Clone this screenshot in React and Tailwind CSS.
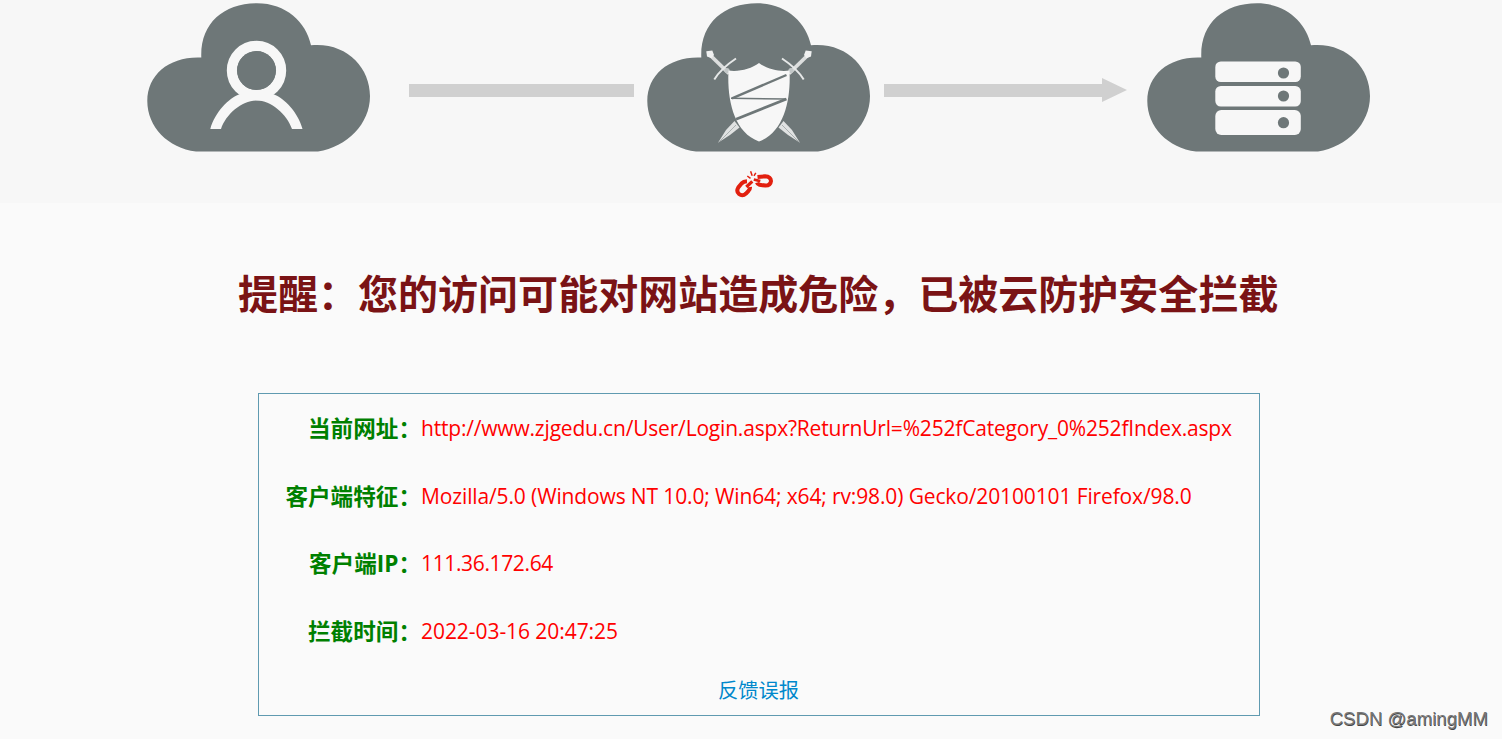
// App.jsx: cloud firewall block page
const CLOUD_PATH =
  'M201.3 57.5 C200 24 223 3.3 257 3.3 C286 3.3 306 22 311 45.3 C346 42 370 67 370 96 C370 124 347 147 318 151.5 L196 151.5 C168 148 147.3 127 147.3 101 C147.3 74 170 56 201.3 57.5 Z';

const details = [
  {
    label: '当前网址：',
    value: 'http://www.zjgedu.cn/User/Login.aspx?ReturnUrl=%252fCategory_0%252fIndex.aspx',
    tracking: 'tracking-[-0.19px]',
  },
  {
    label: '客户端特征：',
    value: 'Mozilla/5.0 (Windows NT 10.0; Win64; x64; rv:98.0) Gecko/20100101 Firefox/98.0',
    tracking: 'tracking-[-0.13px]',
  },
  { label: '客户端IP：', value: '111.36.172.64', tracking: 'tracking-[-0.36px]' },
  { label: '拦截时间：', value: '2022-03-16 20:47:25', tracking: 'tracking-[-0.06px]' },
];

function Cloud({ children }) {
  return (
    <svg className="h-[151px] w-[226px] shrink-0" viewBox="146 2 226 151">
      <path d={CLOUD_PATH} fill="#6e7778" />
      {children}
    </svg>
  );
}

// Sword pointing to the lower right, mirrored for the other one
function Sword() {
  return (
    <g>
      <path d="M210 55 L229 73.5" stroke="#dcdede" strokeWidth="3.8" />
      <path d="M206.3 51.3 L212.3 50.6 L214 55 L211.5 58.3 L207 56.5 Z" fill="#f0f1f1" />
      <circle cx="227" cy="70.5" r="2.6" fill="#c3c8c8" />
      <path d="M214.3 79.5 Q221 68.5 236 58.5" stroke="#e6e8e8" strokeWidth="2" fill="none" />
      <path d="M278.5 127.5 L283.5 121 L292 130 L300 142.8 L288 135 Z" fill="#e0e2e2" />
      <path d="M282 125 L299 142" stroke="#aab0b0" strokeWidth="1" />
    </g>
  );
}

function BrokenLink() {
  return (
    <svg className="h-[30px] w-[40px]" viewBox="734 169 40 30" fill="none" stroke="#e2200f" strokeWidth="4">
      <path d="M747 181.3 Q743.5 181.5 741.5 183.5 L738.3 187.5 Q736 191.5 739 194 Q742.5 196.8 746 193.5 L748.5 190.8 Q750.2 188.8 750 187" />
      <path d="M757.5 177 L765 176.3 Q770.8 176.7 771 181 Q770.5 185.6 765.5 185.6 L759.5 184.8 Q757.5 184.2 757 182.6" />
      <path d="M746.3 187 L752.3 181.3" strokeWidth="3.2" />
      <path d="M753.8 179.5 L760.3 181.2" strokeWidth="2.8" />
      <path d="M747.3 176 L750.5 178.3 M750.6 171.3 L752.2 175.8 M755.8 172.8 L754 175.8" strokeWidth="1.5" />
    </svg>
  );
}

export default function App() {
  return (
    <div className="relative h-[739px] w-[1502px] overflow-hidden bg-[#fafafa] font-['Open_Sans','Noto_Sans_CJK_SC',sans-serif]">
      {/* Visitor -> firewall -> server */}
      <header className="flex h-[203px] flex-col bg-[#f7f7f7] pt-[2px]">
        <div className="flex items-start pl-[146px]">
          <Cloud>
            <circle cx="256.5" cy="70.5" r="24.5" fill="none" stroke="#f7f7f7" strokeWidth="10.4" />
            <path d="M210.3 129 C215 112 229 98 239 94.5 H274 C284 98 298 112 302.5 129 H292 C287 114 271 100.5 256.5 100.5 C242 100.5 226 114 221 129 Z" fill="#f7f7f7" />
            <circle cx="256.5" cy="70.5" r="19.5" fill="#6e7778" />
          </Cloud>
          <div className="mt-[82px] ml-[37px] h-[13px] w-[225px] shrink-0 bg-[#d0d0d0]" />
          <div className="ml-3 shrink-0">
            <Cloud>
              <Sword />
              <g transform="matrix(-1 0 0 1 518 0)">
                <Sword />
              </g>
              <path d="M259 63 C267 69 279 72 289.5 70.5 C291 98 285 132 259 141.5 C233 132 227 98 228.5 70.5 C239 72 251 69 259 63 Z" fill="#f7f7f7" />
              <path d="M286.5 75 L232 98.3" stroke="#6e7778" strokeWidth="2.4" />
              <path d="M231 98.3 L286 99" stroke="#6e7778" strokeWidth="1.4" />
              <path d="M286.5 99 L236 119.3" stroke="#6e7778" strokeWidth="2.8" />
            </Cloud>
          </div>
          <svg className="mt-[76px] ml-3 h-6 w-[243px] shrink-0" viewBox="0 0 243 24" fill="#d0d0d0">
            <path d="M0 6 H218 V0 L243 12 L218 24 V19 H0 Z" />
          </svg>
          <div className="ml-[19px] shrink-0">
            <Cloud>
              <rect x="215.3" y="61.5" width="85.5" height="20.5" rx="5.5" fill="#f7f7f7" />
              <rect x="215.3" y="86" width="85.5" height="20.5" rx="5.5" fill="#f7f7f7" />
              <rect x="215.3" y="110" width="85.5" height="25" rx="6" fill="#f7f7f7" />
              <circle cx="283.5" cy="73" r="5.6" fill="#6e7778" />
              <circle cx="283.5" cy="96" r="5.6" fill="#6e7778" />
              <circle cx="283.5" cy="122.7" r="5.6" fill="#6e7778" />
            </Cloud>
          </div>
        </div>
        <div className="mt-4 ml-[734px]">
          <BrokenLink />
        </div>
      </header>

      <h1 className="mt-[61px] ml-[238px] h-[61px] text-[40.03px] leading-[60px] font-bold whitespace-nowrap text-[#7a1315]">
        提醒：您的访问可能对网站造成危险，已被云防护安全拦截
      </h1>

      {/* Request details */}
      <main className="mt-[68px] ml-[258px] flex h-[323px] w-[1002px] flex-col border border-[#5f9ab0]">
        <dl className="grid grid-cols-[162px_1fr] auto-rows-[67.7px]">
          {details.map((item) => (
            <div key={item.label} className="col-span-2 grid grid-cols-subgrid leading-[69px] whitespace-nowrap">
              <dt className="text-right text-[22.6px] font-bold text-[#008000]">{item.label}</dt>
              <dd className={`text-[21px] text-[#ff0000] ${item.tracking}`}>{item.value}</dd>
            </div>
          ))}
        </dl>
        <a href="#" className="mt-2 mr-px self-center text-[20.25px] leading-[34px] text-[#0088cc]">
          反馈误报
        </a>
      </main>

      <span className="absolute right-[14px] bottom-[8px] font-['Liberation_Sans',sans-serif] text-[18.6px] leading-6 text-[#777] [text-shadow:0.5px_0.5px_0_#444]">
        CSDN @amingMM
      </span>
    </div>
  );
}
